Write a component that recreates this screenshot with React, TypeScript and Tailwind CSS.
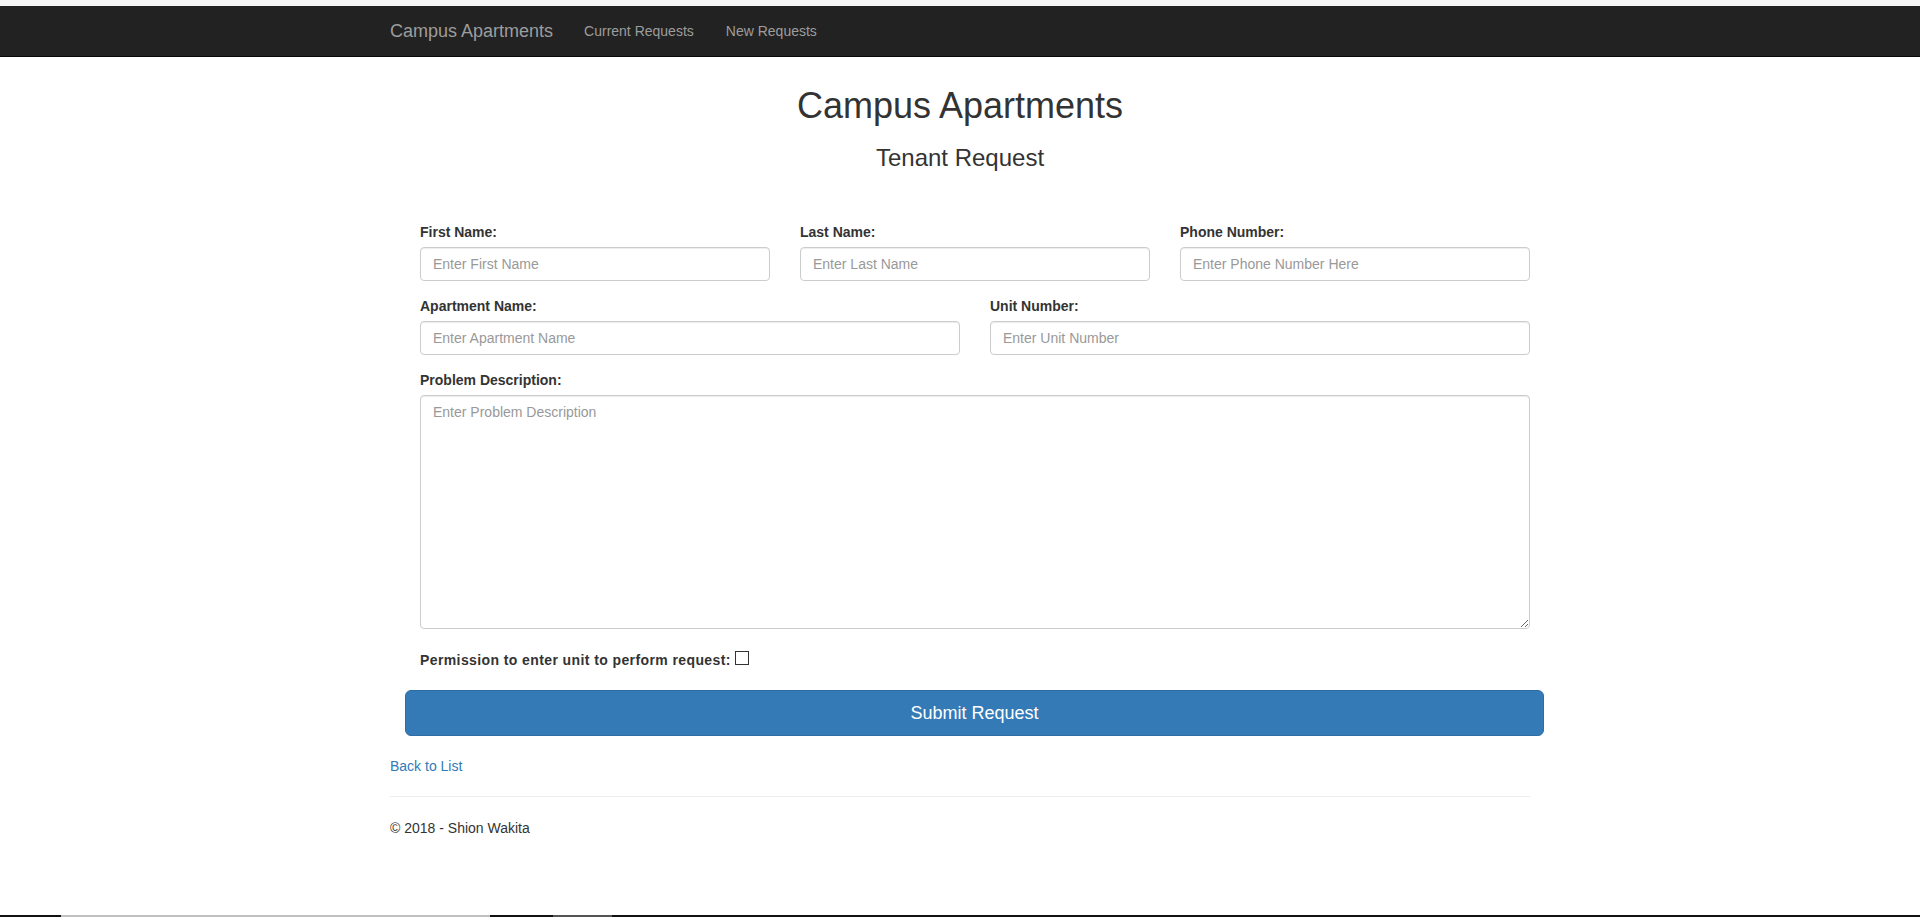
import React from 'react';

const inputClass =
  'block w-full h-[34px] px-[12px] py-[6px] text-[14px] leading-[20px] text-[#555] bg-white border border-[#ccc] rounded-[4px] shadow-[inset_0_1px_1px_rgba(0,0,0,0.075)] placeholder:text-[#999] focus:outline-none';

const labelClass = 'block mb-[5px] text-[14px] leading-[20px] font-bold text-[#333]';

function Field({ label, placeholder }: { label: string; placeholder: string }) {
  return (
    <div className="mb-[15px]">
      <label className={labelClass}>{label}</label>
      <input type="text" placeholder={placeholder} className={inputClass} />
    </div>
  );
}

export default function App() {
  return (
    <div
      className="min-h-[917px] flex flex-col bg-white text-[#333] text-[14px] leading-[20px]"
      style={{ fontFamily: '"Liberation Sans", Arial, Helvetica, sans-serif' }}
    >
      {/* strip above the navbar */}
      <div className="h-[6px] bg-[#f6f6f6]" />

      {/* Navbar */}
      <nav className="h-[51px] bg-[#222] border-b border-[#080808]">
        <div className="w-[1170px] mx-auto px-[15px] h-full flex items-center">
          <a href="#" className="text-[18px] leading-[20px] text-[#9d9d9d] pr-[16px]">
            Campus Apartments
          </a>
          <a href="#" className="px-[15px] text-[14px] leading-[20px] text-[#9d9d9d]">
            Current Requests
          </a>
          <a href="#" className="ml-[2px] px-[15px] text-[14px] leading-[20px] text-[#9d9d9d]">
            New Requests
          </a>
        </div>
      </nav>

      <main className="w-[1170px] mx-auto px-[15px]">
        <h1 className="mt-[29px] text-center text-[36px] leading-[1.1] font-normal">Campus Apartments</h1>
        <h3 className="mt-[19px] text-center text-[24px] leading-[1.1] font-normal">Tenant Request</h3>

        <form className="mt-[51px]" onSubmit={(e) => e.preventDefault()}>
          <div className="pl-[30px] w-[1140px]">
            <div className="grid grid-cols-3 gap-x-[30px]">
              <Field label="First Name:" placeholder="Enter First Name" />
              <Field label="Last Name:" placeholder="Enter Last Name" />
              <Field label="Phone Number:" placeholder="Enter Phone Number Here" />
            </div>
            <div className="grid grid-cols-2 gap-x-[30px]">
              <Field label="Apartment Name:" placeholder="Enter Apartment Name" />
              <Field label="Unit Number:" placeholder="Enter Unit Number" />
            </div>
            <div>
              <label className={labelClass}>Problem Description:</label>
              <textarea
                placeholder="Enter Problem Description"
                className="block w-full h-[234px] px-[12px] py-[6px] text-[14px] leading-[20px] text-[#555] bg-white border border-[#ccc] rounded-[4px] shadow-[inset_0_1px_1px_rgba(0,0,0,0.075)] placeholder:text-[#999] focus:outline-none"
              />
            </div>
            <div className="mt-[21px] flex items-center">
              <label className="text-[14px] leading-[20px] font-bold text-[#333] tracking-[0.4px]">
                Permission to enter unit to perform request:
              </label>
              <input
                type="checkbox"
                className="appearance-none ml-[4px] mb-[3px] w-[14px] h-[14px] border border-[#333] bg-white"
              />
            </div>
          </div>

          <button
            type="submit"
            className="mt-[20px] ml-[15px] w-[1139px] h-[46px] bg-[#337ab7] border border-[#2e6da4] rounded-[6px] text-white text-[18px] leading-[24px]"
          >
            Submit Request
          </button>
        </form>

        <div className="mt-[20px]">
          <a href="#" className="text-[#337ab7]">
            Back to List
          </a>
        </div>

        <hr className="mt-[20px] mb-[21px] border-0 border-t border-[#eee]" />
        <footer>
          <p>© 2018 - Shion Wakita</p>
        </footer>
      </main>

      {/* bottom edge */}
      <div className="mt-auto h-[2px] flex">
        <div className="w-[61px] bg-[#111]" />
        <div className="w-[429px] bg-[#c0c0c0]" />
        <div className="w-[63px] bg-[#111]" />
        <div className="w-[59px] bg-[#555]" />
        <div className="flex-1 bg-[#111]" />
      </div>
    </div>
  );
}
